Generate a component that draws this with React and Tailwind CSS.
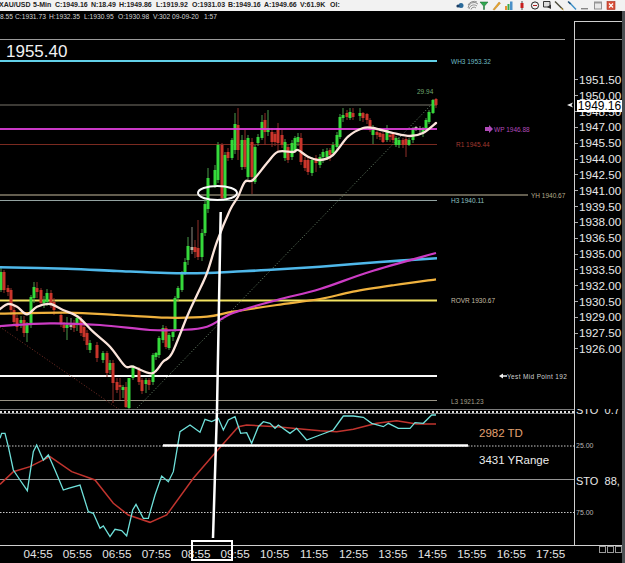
const titleItems = [
  ["XAU/USD", 34], ["5-Min", 22], ["C:1949.16", 36], ["N:18.49", 28], ["H:1949.86", 37], ["L:1919.92", 36],
  ["O:1931.03", 36], ["B:1949.16", 36], ["A:1949.66", 36], ["V:61.9K", 30], ["OI:", 20],
];

const infoItems = [
  ["8.55", 15], ["C:1931.73", 34], ["H:1932.35", 35], ["L:1930.95", 34], ["O:1930.98", 35],
  ["V:302", 19], ["09-09-20", 32], ["1:57", 20],
];

const prices = [
  "1951.50", "1950.00", "1948.50", "1947.00", "1945.50", "1944.00", "1942.50", "1941.00", "1939.50", "1938.00",
  "1936.50", "1935.00", "1933.50", "1932.00", "1930.50", "1929.00", "1927.50", "1926.00",
];

const times = ["04:55", "05:55", "06:55", "07:55", "08:55", "09:55", "10:55", "11:55", "12:55", "13:55", "14:55", "15:55", "16:55", "17:55"];

// x, wick top, body top, body bottom, wick bottom, colour
const candles = [
  [1, 268, 272, 290, 292, "g"], [4, 270, 272, 290, 293, "r"], [8, 285, 288, 292, 296, "r"], [11, 288, 290, 310, 315, "r"],
  [14, 305, 310, 322, 326, "r"], [17, 315, 318, 327, 331, "r"], [21, 316, 320, 323, 328, "g"], [24, 316, 320, 333, 337, "r"],
  [27, 322, 325, 333, 342, "g"], [31, 295, 297, 325, 328, "g"], [34, 282, 287, 298, 303, "g"], [37, 282, 288, 292, 298, "r"],
  [41, 288, 290, 303, 306, "r"], [44, 296, 300, 303, 308, "g"], [47, 289, 293, 302, 306, "g"], [51, 290, 293, 303, 308, "r"],
  [54, 298, 302, 310, 315, "r"], [61, 312, 315, 323, 327, "r"], [64, 322, 325, 328, 332, "r"], [67, 317, 325, 328, 340, "g"],
  [71, 318, 325, 327, 330, "n"], [74, 320, 325, 328, 332, "r"], [77, 315, 318, 325, 331, "g"], [81, 316, 320, 333, 336, "r"],
  [84, 324, 327, 337, 341, "r"], [87, 330, 333, 345, 350, "r"], [90, 340, 343, 350, 353, "g"], [97, 342, 345, 358, 362, "r"],
  [103, 351, 353, 360, 363, "g"], [107, 351, 353, 373, 377, "r"], [110, 360, 363, 370, 374, "g"], [113, 360, 363, 383, 403, "r"],
  [117, 378, 382, 390, 393, "r"], [120, 378, 385, 387, 400, "r"], [123, 385, 387, 390, 398, "g"], [126, 382, 387, 407, 408, "r"],
  [129, 378, 378, 408, 409, "g"], [133, 365, 367, 378, 380, "g"], [139, 367, 370, 382, 385, "r"], [142, 378, 380, 391, 394, "r"],
  [146, 378, 380, 384, 393, "g"], [149, 378, 380, 385, 390, "r"], [153, 353, 355, 382, 385, "g"], [156, 352, 353, 357, 360, "g"],
  [159, 336, 338, 355, 358, "g"], [163, 325, 328, 340, 343, "g"], [166, 326, 328, 347, 349, "r"], [169, 333, 335, 348, 350, "g"],
  [173, 330, 332, 337, 341, "g"], [175, 296, 298, 330, 332, "g"], [178, 286, 288, 298, 301, "g"], [182, 271, 273, 290, 292, "g"],
  [185, 258, 262, 272, 275, "g"], [188, 237, 246, 260, 265, "g"], [192, 227, 247, 250, 254, "n"], [195, 240, 247, 252, 258, "r"],
  [198, 220, 248, 257, 260, "r"], [202, 229, 233, 257, 261, "g"], [205, 199, 204, 233, 236, "g"], [208, 168, 178, 209, 213, "g"],
  [215, 165, 170, 185, 188, "g"], [218, 142, 145, 180, 183, "g"], [222, 143, 145, 198, 200, "r"], [225, 152, 155, 198, 201, "g"],
  [228, 148, 152, 158, 161, "r"], [232, 138, 140, 158, 160, "g"], [235, 113, 124, 150, 154, "g"], [238, 108, 125, 150, 160, "r"],
  [242, 135, 140, 167, 170, "g"], [245, 130, 140, 167, 169, "r"], [248, 135, 138, 177, 179, "g"], [252, 138, 142, 177, 194, "r"],
  [255, 145, 147, 182, 184, "g"], [258, 134, 137, 143, 146, "g"], [262, 115, 122, 138, 140, "g"], [265, 113, 120, 132, 145, "r"],
  [268, 110, 128, 132, 136, "g"], [272, 128, 132, 142, 147, "r"], [275, 132, 134, 142, 146, "r"], [278, 123, 128, 143, 151, "r"],
  [282, 130, 135, 145, 148, "r"], [285, 139, 142, 158, 161, "g"], [288, 144, 147, 160, 163, "r"], [292, 140, 143, 157, 160, "g"],
  [295, 136, 138, 150, 153, "g"], [298, 133, 137, 142, 146, "g"], [301, 133, 138, 162, 165, "r"], [305, 157, 160, 168, 171, "r"],
  [308, 157, 160, 172, 175, "r"], [312, 157, 160, 173, 176, "g"], [316, 155, 158, 163, 172, "r"], [320, 154, 157, 165, 168, "g"],
  [323, 149, 152, 157, 163, "g"], [327, 148, 151, 157, 160, "g"], [330, 148, 150, 155, 161, "r"], [333, 142, 145, 153, 156, "g"],
  [337, 132, 135, 147, 150, "g"], [340, 114, 117, 137, 139, "g"], [343, 108, 115, 118, 122, "g"], [347, 110, 113, 117, 120, "r"],
  [350, 108, 112, 118, 120, "g"], [353, 108, 113, 117, 120, "r"], [360, 108, 113, 116, 121, "g"], [363, 112, 113, 118, 122, "r"],
  [367, 113, 114, 120, 124, "r"], [370, 118, 120, 130, 132, "r"], [373, 125, 128, 135, 144, "g"], [377, 130, 132, 135, 139, "r"],
  [380, 132, 133, 137, 140, "r"], [383, 132, 134, 142, 143, "r"], [387, 125, 130, 140, 142, "g"], [390, 134, 135, 137, 142, "r"],
  [393, 132, 133, 140, 143, "r"], [396, 136, 138, 145, 147, "g"], [399, 137, 140, 145, 148, "g"], [403, 138, 140, 145, 148, "r"],
  [406, 137, 139, 145, 157, "r"], [409, 138, 140, 145, 146, "g"], [413, 127, 128, 140, 143, "g"], [416, 126, 127, 129, 131, "n"],
  [420, 126, 128, 130, 134, "n"], [423, 127, 128, 133, 137, "g"], [426, 118, 120, 128, 130, "g"], [429, 110, 112, 122, 124, "g"],
  [433, 99, 100, 113, 114, "g"], [436, 98, 99, 105, 108, "r"],
];

const bodyColor = { g: "#35d93b", r: "#c9352b", n: "#b9b9a8" };
const wickColor = { g: "#4a9a4a", r: "#8f2f28", n: "#8a8a80" };

const pts = (list) => list.map((p) => p.join(",")).join(" ");
// stochastic lines were read off a 3x crop, so scale them back to page pixels
const fromCrop = (list, ox, oy) => list.map(([x, y]) => [ox + x / 3, oy + y / 3]);

// moving averages are smooth in the picture, so run a spline through the read points
const smooth = (list) => {
  let d = `M${list[0][0]} ${list[0][1]}`;
  for (let i = 0; i < list.length - 1; i++) {
    const p0 = list[i - 1] || list[i];
    const p1 = list[i];
    const p2 = list[i + 1];
    const p3 = list[i + 2] || p2;
    const c1x = p1[0] + (p2[0] - p0[0]) / 6;
    const c1y = p1[1] + (p2[1] - p0[1]) / 6;
    const c2x = p2[0] - (p3[0] - p1[0]) / 6;
    const c2y = p2[1] - (p3[1] - p1[1]) / 6;
    d += ` C${c1x} ${c1y} ${c2x} ${c2y} ${p2[0]} ${p2[1]}`;
  }
  return d;
};

const blueMa = [[0, 267.3], [67, 268.7], [117, 271], [167, 273], [207, 273], [233, 271.7], [267, 270], [320, 266.7], [380, 262], [437, 258.3]];
const magentaMa = [[0, 326], [50, 323.3], [100, 325], [150, 330], [180, 330], [207, 326.7], [233, 313], [277, 300], [320, 289], [370, 271.7], [436, 253]];
const orangeMa = [[0, 313.7], [67, 312.7], [117, 315], [167, 317.7], [207, 316.7], [233, 311.7], [277, 305], [320, 299], [353, 291.7], [395, 285], [436, 279.3]];
const creamMa = [
  [0, 309], [8, 304], [17, 306.7], [27, 314.3], [37, 306.7], [50, 304], [63, 310], [78, 316.7], [93, 331.7], [110, 346.7],
  [125, 366], [133, 366.7], [152, 373.3], [163, 361.7], [172, 353.3], [187, 316.7], [197, 295], [207, 273], [217, 241.7], [230, 210],
  [238, 196.7], [245, 181.7], [253, 180], [267, 163], [278, 151.7], [293, 152], [298, 150], [308, 156.7], [320, 160], [333, 155],
  [348, 136.7], [363, 128], [373, 128], [393, 133], [410, 136], [423, 133], [436, 123],
];

const stoCyan = [
  ...fromCrop([
    [0, 115], [5, 100], [15, 100], [25, 140], [40, 210], [60, 240], [82, 272], [100, 155], [110, 135], [130, 180], [145, 165], [165, 210],
    [190, 270], [205, 265], [240, 255], [265, 335], [280, 340], [300, 385], [310, 378], [330, 410], [345, 388], [365, 392], [380, 408],
    [398, 330], [408, 313], [430, 355], [445, 355], [465, 285], [485, 228], [505, 245], [520, 215], [540, 95], [570, 75], [600, 97],
    [615, 58], [635, 65], [655, 55], [670, 90], [685, 60], [705, 50], [722, 100], [740, 98], [755, 130], [775, 80], [790, 65], [810, 70],
    [825, 85], [835, 75], [870, 100], [890, 85], [920, 120], [960, 105],
  ], 0, 400),
  ...fromCrop([
    [40, 90], [70, 48], [100, 48], [130, 52], [155, 70], [190, 80], [205, 70], [235, 85], [270, 85], [285, 68], [310, 70], [335, 45], [348, 45],
  ], 320, 400),
];

const stoRed = [
  ...fromCrop([
    [0, 253], [40, 215], [90, 200], [150, 170], [215, 215], [285, 240], [340, 310], [385, 345], [450, 367], [500, 345], [580, 235],
    [640, 165], [715, 80], [740, 75], [830, 80], [960, 92],
  ], 0, 400),
  ...fromCrop([[50, 95], [100, 88], [170, 70], [230, 62], [290, 72], [348, 72]], 320, 400),
];

const levelLabels = [
  ["WH3 1953.32", 451, 63.5, "#6fbcc4"],
  ["WP 1946.88", 494, 131.5, "#b04ab8"],
  ["R1 1945.44", 456, 147, "#a03a30"],
  ["YH 1940.67", 531, 197.5, "#b5ab8c"],
  ["H3 1940.11", 451, 203, "#8fc0c0"],
  ["ROVR 1930.67", 451, 303, "#c4bda4"],
  ["L3 1921.23", 451, 403.5, "#a8a08c"],
  ["29.94", 417, 94, "#6fa86f"],
];

function WindowIcons() {
  return (
    <svg width="165" height="11" viewBox="0 0 165 11" className="ml-auto mr-[5px]">
      <circle cx="6" cy="5.5" r="2.5" fill="#2b6a9a" />
      <circle cx="3" cy="6" r="1.6" fill="#1c3f66" />
      <path d="M13 8 A6 6 0 0 1 23 4 M14 9 A5 5 0 0 1 22 6 M16 9.5 A3 3 0 0 1 21 8 M13 5 A7 7 0 0 1 22 2" stroke="#777" strokeWidth="0.8" fill="none" />
      <path d="M25 2 H33 L29.5 6 V9.5 H28.5 V6 Z" fill="#2fa84f" stroke="#14602c" strokeWidth="0.5" />
      <path d="M38 9.5 L44 2 L45.5 3.2 L39.5 10 Z" fill="#e8a52e" stroke="#a87016" strokeWidth="0.4" />
      <rect x="50" y="6" width="2" height="4" fill="#e89030" />
      <rect x="52.5" y="4" width="2" height="6" fill="#3aa84a" />
      <rect x="55" y="1.5" width="2.5" height="8.5" fill="#4a90c8" />
      <path d="M67 1 V10" stroke="#222" strokeWidth="0.8" />
      <rect x="65.5" y="3" width="3" height="5" fill="#c81e1e" />
      <circle cx="80" cy="5.5" r="3.6" fill="none" stroke="#222" strokeWidth="1" />
      <path d="M78 5.5 H82" stroke="#b02020" strokeWidth="1" />
      <path d="M88.5 1.5 H95 V7 H88.5 Z" fill="#ddd" stroke="#222" strokeWidth="0.9" />
      <path d="M92 7 L96 4.5 V9 Z" fill="#333" />
      <path d="M100 1.5 L108 9.5" stroke="#4a4a3a" strokeWidth="1.4" />
      <path d="M106 8 L108.5 10" stroke="#c8a030" strokeWidth="1" />
      <path d="M114 2 L121 9.5" stroke="#3a8fc8" strokeWidth="1.4" />
      <path d="M113 1.5 L115.5 4" stroke="#1c4a70" strokeWidth="1.2" />
      <rect x="126" y="8" width="7" height="1.4" fill="#888" />
      <rect x="139.5" y="2" width="7" height="7" fill="#e8e8e8" stroke="#888" strokeWidth="0.9" />
      <rect x="139.5" y="2" width="7" height="1.5" fill="#999" />
      <rect x="152" y="1.5" width="8" height="8" fill="#d8503a" stroke="#a83020" strokeWidth="0.6" />
      <path d="M154 3.5 L158 7.5 M158 3.5 L154 7.5" stroke="#fff" strokeWidth="1.2" />
    </svg>
  );
}

function PriceChart() {
  return (
    <svg width="574" height="398" viewBox="0 11 574 398" className="block">
      <line x1="0" y1="39.5" x2="565" y2="39.5" stroke="#9a9a9a" />
      <line x1="0" y1="61" x2="437" y2="61" stroke="#62d0e8" strokeWidth="2" />
      <line x1="0" y1="105" x2="437" y2="105" stroke="#78746a" />
      <line x1="0" y1="195" x2="528" y2="195" stroke="#857e6a" strokeWidth="1.3" />
      <line x1="0" y1="200.5" x2="437" y2="200.5" stroke="#94a4a2" />
      <line x1="0" y1="144.5" x2="437" y2="144.5" stroke="#7a2a20" />
      <line x1="0" y1="300.5" x2="437" y2="300.5" stroke="#f4e462" strokeWidth="2" />
      <line x1="0" y1="376" x2="437" y2="376" stroke="#fafafa" strokeWidth="2" />
      <line x1="0" y1="400.5" x2="437" y2="400.5" stroke="#9a9486" />

      <line x1="0" y1="327" x2="120" y2="410" stroke="#7a3028" strokeDasharray="1 2" />
      <line x1="137" y1="408" x2="432" y2="104" stroke="#6f8a6f" strokeDasharray="1 2" />

      {candles.map(([x, wickTop, top, bottom, wickBottom, color]) => (
        <g key={x}>
          <line x1={x} y1={wickTop} x2={x} y2={wickBottom} stroke={wickColor[color]} />
          <rect x={x - 1.5} y={top} width="3" height={bottom - top} fill={bodyColor[color]} />
        </g>
      ))}

      <line x1="0" y1="129" x2="437" y2="129" stroke="#e040dc" strokeWidth="2" opacity="0.9" />

      <path d={smooth(orangeMa)} fill="none" stroke="#f0b23e" strokeWidth="2.2" />
      <path d={smooth(blueMa)} fill="none" stroke="#4fb8ea" strokeWidth="2.6" />
      <path d={smooth(magentaMa)} fill="none" stroke="#cc3cc4" strokeWidth="2.2" />
      <path d={smooth(creamMa)} fill="none" stroke="#fbe4da" strokeWidth="2.3" strokeLinecap="round" />

      <path d="M485 127 H489 V125 L493 129 L489 133 V131 H485 Z" fill="#b04ab8" />
      <path d="M499 376 L503 373.5 V375.2 H507 V376.8 H503 V378.5 Z" fill="#f0f0f0" />
      <path d="M567 105 L573 102.5 L571.5 105 L573 107.5 Z" fill="#f0f0f0" />

      {levelLabels.map(([text, x, y, color]) => (
        <text key={text} x={x} y={y} fill={color} className="text-[6.5px]">{text}</text>
      ))}
      <text x="507" y="379" fill="#d0d0d0" className="text-[6.5px] tracking-[0.35px]">Yest Mid Point 192</text>
      <text x="6" y="57" fill="#f2f2f2" className="text-[17px]">1955.40</text>
    </svg>
  );
}

function StochasticChart() {
  return (
    <svg width="574" height="132" viewBox="0 414 574 132" className="block">
      <line x1="0" y1="446" x2="574" y2="446" stroke="#c8c8c8" strokeDasharray="1.5 1.5" />
      <line x1="0" y1="479.5" x2="574" y2="479.5" stroke="#949494" />
      <line x1="0" y1="512.5" x2="574" y2="512.5" stroke="#c8c8c8" strokeDasharray="1.5 1.5" />
      <polyline points={pts(stoRed)} fill="none" stroke="#c0342e" strokeWidth="1.5" />
      <polyline points={pts(stoCyan)} fill="none" stroke="#6fe0da" strokeWidth="1.3" />
      <text x="479" y="437" fill="#e2a070" className="text-[11.5px]">2982 TD</text>
      <text x="479" y="464" fill="#ececec" className="text-[11.5px]">3431 YRange</text>
    </svg>
  );
}

export default function App() {
  return (
    <div className="relative w-[625px] h-[563px] bg-black overflow-hidden font-['Liberation_Sans',Arial,sans-serif]">
      <div className="flex items-center h-[11px] bg-[#f2f2f2] text-[7px] font-bold text-[#222] whitespace-nowrap">
        <div className="flex -ml-px">
          {titleItems.map(([text, width]) => (
            <span key={text} style={{ width }}>{text}</span>
          ))}
        </div>
        <WindowIcons />
      </div>

      <div className="flex h-[552px]">
        <div className="w-[622px] flex flex-col">
          <div className="flex h-[398px]">
            <div className="relative w-[574px]">
              <PriceChart />
              <div className="absolute left-0 top-[1px] flex text-[6.7px] leading-[9px] text-[#d5d5d5] whitespace-nowrap">
                {infoItems.map(([text, width]) => (
                  <span key={text} style={{ width }}>{text}</span>
                ))}
              </div>
            </div>
            <div className="relative flex-1 mt-[10px] border-l border-t border-[#cfcfcf]">
              <div className="h-[18px] border-b border-[#9a9a9a]" />
              <div className="mt-[32px] text-[11.7px] leading-[15.83px] text-[#e8e8e8]">
                {prices.map((p) => (
                  <div key={p} className="flex items-center h-[15.83px]">
                    <span className="w-[3px] h-px bg-[#aaa]" />
                    <span className="ml-px">{p}</span>
                  </div>
                ))}
              </div>
              <div className="absolute left-[2px] top-[78px] w-[45px] h-[12px] bg-white text-black text-[12px] leading-[12px] text-center">
                1949.16
              </div>
            </div>
          </div>

          <div className="flex h-[5px]">
            <div className="w-[574px] border-y border-[#7d7d7d]">
              <div className="mt-px border-t-2 border-dotted border-[#e0e0e0]" />
            </div>
            <div className="relative flex-1 overflow-hidden border-l border-[#cfcfcf]">
              <span className="absolute left-px -bottom-[2px] text-[11px] leading-[12px] text-[#e8e8e8] whitespace-pre">STO  0.7</span>
            </div>
          </div>

          <div className="flex h-[132px] border-b border-[#cfcfcf]">
            <StochasticChart />
            <div className="flex-1 overflow-hidden border-l border-[#cfcfcf] pl-px">
              <div className="mt-[27px] h-[10px] text-[7px] leading-[10px] text-[#b5b5b5]">25.00</div>
              <div className="mt-[23px] h-[14px] text-[11px] leading-[14px] text-[#e8e8e8] whitespace-pre">STO  88,</div>
              <div className="mt-[20px] h-[10px] text-[7px] leading-[10px] text-[#b5b5b5]">75.00</div>
            </div>
          </div>

          <div className="flex flex-1 items-start">
            <div className="flex pl-[18.3px] pt-[1px] text-[11.7px] leading-[14px] text-[#e4e4e4]">
              {times.map((t) => (
                <span key={t} className="w-[39.45px] text-center">{t}</span>
              ))}
            </div>
            <div className="flex ml-auto gap-px">
              <span className="w-[7px] h-[7px] border border-[#999]" />
              <span className="w-[7px] h-[7px] border border-[#999]" />
              <span className="w-[7px] h-[7px] border border-[#999]" />
            </div>
          </div>
        </div>
        <div className="w-[3px] bg-[#4a4f52]" />
      </div>

      {/* hand-drawn markup sitting on top of the whole chart */}
      <svg width="625" height="563" viewBox="0 0 625 563" className="absolute inset-0 pointer-events-none">
        <ellipse cx="217.5" cy="193" rx="19.5" ry="7" fill="none" stroke="#fafafa" strokeWidth="2" />
        <path d="M220.7 212 L217 410 L213 538" fill="none" stroke="#fff" strokeWidth="2.5" />
        <path d="M163 445.5 H468" stroke="#fff" strokeWidth="2.5" />
        <rect x="192" y="541" width="40" height="19" fill="none" stroke="#fff" strokeWidth="2" />
      </svg>
    </div>
  );
}
